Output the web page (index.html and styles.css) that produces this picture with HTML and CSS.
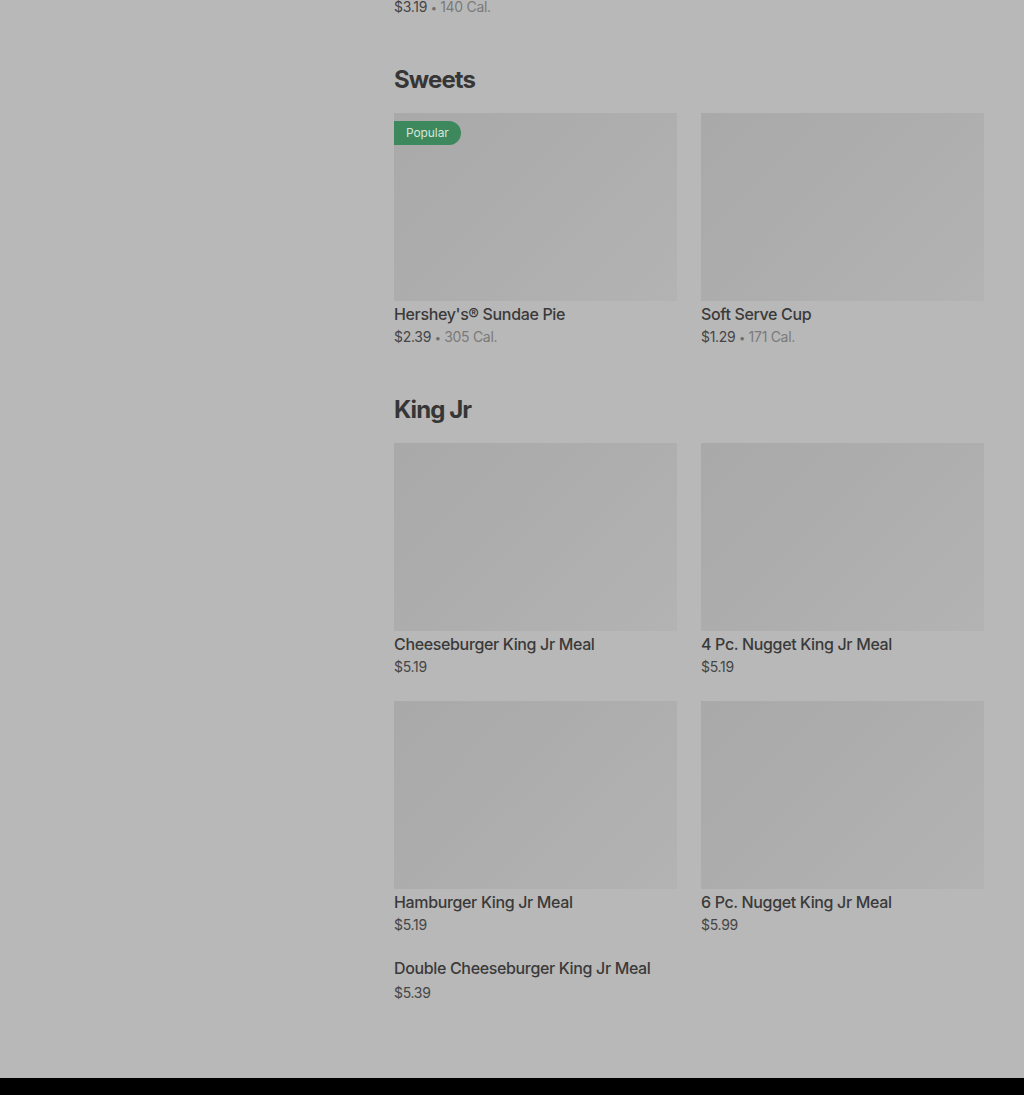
FILE: index.html
```html
<!DOCTYPE html>
<html lang="en">
<head>
<meta charset="utf-8">
<title>Menu</title>
<link rel="stylesheet" href="styles.css">
</head>
<body>
<main class="menu">
  <p class="meta top-meta"><span class="price">$3.19</span> <span class="dot">•</span> <span class="cal">140 Cal.</span></p>

  <section class="section">
    <h2 class="section-title">Sweets</h2>
    <div class="grid">
      <article class="card">
        <div class="thumb"><span class="badge">Popular</span></div>
        <h3 class="item-name">Hershey's® Sundae Pie</h3>
        <p class="meta"><span class="price">$2.39</span> <span class="dot">•</span> <span class="cal">305 Cal.</span></p>
      </article>
      <article class="card">
        <div class="thumb"></div>
        <h3 class="item-name">Soft Serve Cup</h3>
        <p class="meta"><span class="price">$1.29</span> <span class="dot">•</span> <span class="cal">171 Cal.</span></p>
      </article>
    </div>
  </section>

  <section class="section last">
    <h2 class="section-title">King Jr</h2>
    <div class="grid">
      <article class="card">
        <div class="thumb"></div>
        <h3 class="item-name">Cheeseburger King Jr Meal</h3>
        <p class="meta"><span class="price">$5.19</span></p>
      </article>
      <article class="card">
        <div class="thumb"></div>
        <h3 class="item-name">4 Pc. Nugget King Jr Meal</h3>
        <p class="meta"><span class="price">$5.19</span></p>
      </article>
      <article class="card">
        <div class="thumb"></div>
        <h3 class="item-name">Hamburger King Jr Meal</h3>
        <p class="meta"><span class="price">$5.19</span></p>
      </article>
      <article class="card">
        <div class="thumb"></div>
        <h3 class="item-name">6 Pc. Nugget King Jr Meal</h3>
        <p class="meta"><span class="price">$5.99</span></p>
      </article>
      <article class="card no-image">
        <h3 class="item-name">Double Cheeseburger King Jr Meal</h3>
        <p class="meta"><span class="price">$5.39</span></p>
      </article>
    </div>
  </section>
</main>
<footer class="footer"></footer>
</body>
</html>
```
FILE: styles.css
```css
* { box-sizing: border-box; }
html, body {
  margin: 0;
  padding: 0;
  background: #b8b8b8;
  font-family: Inter, "Liberation Sans", Arial, sans-serif;
  overflow: hidden;
}
.menu {
  margin-left: 394px;
  width: 590px;
}
.meta {
  margin: 3px 0 0;
  height: 20px;
  font-size: 14px;
  line-height: 20px;
  color: #454545;
  letter-spacing: -0.3px;
}
.top-meta { margin-top: -3px; }
.meta .dot { color: #6e6e6e; font-size: 11px; line-height: 0; }
.meta .cal { color: #7a7a7a; }
.section-title {
  margin: 47px 0 17px;
  font-size: 24px;
  line-height: 32px;
  font-weight: 700;
  color: #363636;
  letter-spacing: -0.9px;
}
.section.last { padding-bottom: 75px; }
.grid {
  display: grid;
  grid-template-columns: 283px 283px;
  column-gap: 24px;
  row-gap: 24px;
}
.thumb {
  position: relative;
  height: 188px;
  background: linear-gradient(135deg, #a9a9a9 0%, #adadad 45%, #b3b3b3 100%);
}
.badge {
  position: absolute;
  top: 8px;
  left: 0;
  height: 24px;
  padding: 0 12px;
  border-radius: 0 12px 12px 0;
  background: #3d885d;
  color: #d6e6dc;
  font-size: 12px;
  line-height: 24px;
  letter-spacing: -0.1px;
}
.item-name {
  margin: 3px 0 0;
  font-size: 16px;
  line-height: 20px;
  font-weight: 500;
  color: #3a3a3a;
  letter-spacing: -0.35px;
}
.no-image .item-name { margin-top: -1px; }
.no-image .meta { margin-top: 5px; }
.footer {
  height: 120px;
  background: #000;
}
```
